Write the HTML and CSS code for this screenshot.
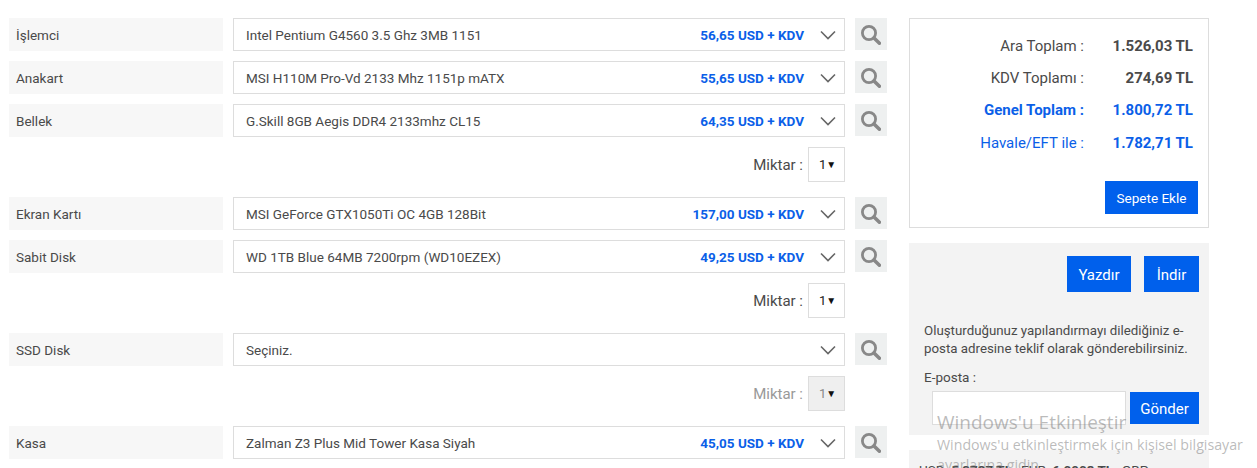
FILE: index.html
```html
<!DOCTYPE html>
<html lang="en">
<head>
    <meta charset="UTF-8">
    <meta name="viewport" content="width=device-width, initial-scale=1.0">
    <title>Sistem Toplama</title>
    <link rel="stylesheet" href="styles.css">
</head>
<body>
    <svg class="icon-defs" width="0" height="0">
        <symbol id="chevron" viewBox="0 0 16 10">
            <path d="M1 1.5 8 8.5 15 1.5" fill="none" stroke="#666" stroke-width="1.6"/>
        </symbol>
        <symbol id="search" viewBox="0 0 20 20">
            <circle cx="8" cy="8" r="6.6" fill="none" stroke="#888" stroke-width="2.8"/>
            <path d="M13 13 18.4 18.2" fill="none" stroke="#888" stroke-width="3.6" stroke-linecap="round"/>
        </symbol>
    </svg>

    <main class="page">
        <section class="parts">
            <div class="part">
                <div class="part-label">İşlemci</div>
                <div class="part-select">
                    <span class="part-name">Intel Pentium G4560 3.5 Ghz 3MB 1151</span>
                    <span class="part-price">56,65 USD + KDV</span>
                    <svg class="chevron"><use href="#chevron"/></svg>
                </div>
                <button class="search-button"><svg class="search-icon"><use href="#search"/></svg></button>
            </div>
            <div class="part">
                <div class="part-label">Anakart</div>
                <div class="part-select">
                    <span class="part-name">MSI H110M Pro-Vd 2133 Mhz 1151p mATX</span>
                    <span class="part-price">55,65 USD + KDV</span>
                    <svg class="chevron"><use href="#chevron"/></svg>
                </div>
                <button class="search-button"><svg class="search-icon"><use href="#search"/></svg></button>
            </div>
            <div class="part">
                <div class="part-label">Bellek</div>
                <div class="part-select">
                    <span class="part-name">G.Skill 8GB Aegis DDR4 2133mhz CL15</span>
                    <span class="part-price">64,35 USD + KDV</span>
                    <svg class="chevron"><use href="#chevron"/></svg>
                </div>
                <button class="search-button"><svg class="search-icon"><use href="#search"/></svg></button>
            </div>
            <div class="quantity">
                <span>Miktar :</span>
                <div class="quantity-box"><span class="quantity-value">1</span><span class="quantity-arrow">▼</span></div>
            </div>
            <div class="part">
                <div class="part-label">Ekran Kartı</div>
                <div class="part-select">
                    <span class="part-name">MSI GeForce GTX1050Ti OC 4GB 128Bit</span>
                    <span class="part-price">157,00 USD + KDV</span>
                    <svg class="chevron"><use href="#chevron"/></svg>
                </div>
                <button class="search-button"><svg class="search-icon"><use href="#search"/></svg></button>
            </div>
            <div class="part">
                <div class="part-label">Sabit Disk</div>
                <div class="part-select">
                    <span class="part-name">WD 1TB Blue 64MB 7200rpm (WD10EZEX)</span>
                    <span class="part-price">49,25 USD + KDV</span>
                    <svg class="chevron"><use href="#chevron"/></svg>
                </div>
                <button class="search-button"><svg class="search-icon"><use href="#search"/></svg></button>
            </div>
            <div class="quantity">
                <span>Miktar :</span>
                <div class="quantity-box"><span class="quantity-value">1</span><span class="quantity-arrow">▼</span></div>
            </div>
            <div class="part">
                <div class="part-label">SSD Disk</div>
                <div class="part-select">
                    <span class="part-name">Seçiniz.</span>
                    <svg class="chevron"><use href="#chevron"/></svg>
                </div>
                <button class="search-button"><svg class="search-icon"><use href="#search"/></svg></button>
            </div>
            <div class="quantity disabled">
                <span>Miktar :</span>
                <div class="quantity-box"><span class="quantity-value">1</span><span class="quantity-arrow">▼</span></div>
            </div>
            <div class="part">
                <div class="part-label">Kasa</div>
                <div class="part-select">
                    <span class="part-name">Zalman Z3 Plus Mid Tower Kasa Siyah</span>
                    <span class="part-price">45,05 USD + KDV</span>
                    <svg class="chevron"><use href="#chevron"/></svg>
                </div>
                <button class="search-button"><svg class="search-icon"><use href="#search"/></svg></button>
            </div>
        </section>

        <aside class="side">
            <div class="totals">
                <div class="total-row"><span class="total-label">Ara Toplam :</span><b class="total-value">1.526,03 TL</b></div>
                <div class="total-row"><span class="total-label">KDV Toplamı :</span><b class="total-value">274,69 TL</b></div>
                <div class="total-row blue"><b class="total-label">Genel Toplam :</b><b class="total-value">1.800,72 TL</b></div>
                <div class="total-row blue"><span class="total-label">Havale/EFT ile :</span><b class="total-value">1.782,71 TL</b></div>
                <div class="cart-row"><button class="blue-button cart-button">Sepete Ekle</button></div>
            </div>
            <div class="share">
                <div class="share-buttons">
                    <button class="blue-button share-button">Yazdır</button>
                    <button class="blue-button share-button">İndir</button>
                </div>
                <p class="share-text">Oluşturduğunuz yapılandırmayı dilediğiniz e-posta adresine teklif olarak gönderebilirsiniz.</p>
                <div class="mail-label">E-posta :</div>
                <div class="mail-row">
                    <input class="mail-input" type="text">
                    <button class="blue-button send-button">Gönder</button>
                </div>
            </div>
            <div class="rates">
                <span>USD: <b>5,3737 TL</b></span>
                <span>EUR: <b>6,0903 TL</b></span>
                <span>GBP</span>
            </div>
        </aside>
    </main>

    <div class="activate">
        <div class="activate-title">Windows'u Etkinleştir</div>
        <div class="activate-text">Windows'u etkinleştirmek için kişisel bilgisayar<br>ayarlarına gidin.</div>
    </div>
</body>
</html>
```

FILE: styles.css
```css
html, body {
    height: 468px;
    overflow: hidden;
}

body {
    margin: 0;
    background-color: white;
    color: #4a4a4a;
    font-family: "Roboto", "Liberation Sans", sans-serif;
    font-size: 13.5px;
}

button {
    font-family: inherit;
    border: 0;
    padding: 0;
}

.icon-defs {
    position: absolute;
}

.page {
    display: flex;
    align-items: flex-start;
    padding: 18px 0 0 9px;
}

.parts {
    width: 878px;
    flex-shrink: 0;
}

.part {
    display: flex;
    height: 33px;
    margin-bottom: 10px;
}

.part-label {
    width: 207px;
    padding-left: 7px;
    margin-right: 10px;
    line-height: 35px;
    background-color: #f7f7f7;
}

.part-select {
    display: flex;
    align-items: center;
    box-sizing: border-box;
    width: 612px;
    padding: 1px 8px 0 12px;
    border: 1px solid #ddd;
}

.part-name {
    flex: 1;
}

.part-price {
    font-weight: 700;
    color: #0b5fe8;
}

.chevron {
    width: 16px;
    height: 10px;
    margin-left: 16px;
}

.search-button {
    width: 32px;
    height: 32px;
    margin-left: 10px;
    background-color: #eef0f0;
}

.search-icon {
    display: block;
    width: 20px;
    height: 20px;
    margin: 1px 0 0 6px;
}

.quantity {
    display: flex;
    align-items: center;
    justify-content: flex-end;
    gap: 5px;
    width: 836px;
    height: 35px;
    margin-bottom: 15px;
    font-size: 15px;
}

.quantity-box {
    box-sizing: border-box;
    width: 37px;
    height: 35px;
    border: 1px solid #ddd;
    padding-left: 10px;
    line-height: 33px;
    font-size: 13px;
    color: #222;
}

.quantity-arrow {
    font-size: 10px;
    vertical-align: 1px;
    color: #111;
}

.quantity.disabled {
    color: #999;
}

.quantity.disabled .quantity-box {
    background-color: #efefef;
    color: #888;
}

.side {
    width: 300px;
    margin-left: 22px;
    flex-shrink: 0;
}

.totals {
    box-sizing: border-box;
    height: 210px;
    padding: 11px 15px 0;
    border: 1px solid #ddd;
    margin-bottom: 15px;
}

.total-row {
    display: flex;
    justify-content: flex-end;
    height: 32.2px;
    line-height: 32px;
    font-size: 15px;
}

.total-label {
    text-align: right;
}

.total-value {
    width: 109px;
    text-align: right;
}

.total-row.blue {
    color: #0b5fe8;
}

.cart-row {
    display: flex;
    justify-content: flex-end;
    margin: 22px -5px 0 0;
}

.blue-button {
    padding-top: 2px;
    background-color: #0060ec;
    color: white;
    font-size: 15px;
}

.cart-button {
    width: 93px;
    height: 33px;
    font-size: 13.5px;
}

.share {
    box-sizing: border-box;
    height: 192px;
    padding: 13px 10px 0 15px;
    background-color: #f3f3f3;
    margin-bottom: 15px;
}

.share-buttons {
    display: flex;
    justify-content: flex-end;
    gap: 13px;
}

.share-button {
    height: 36px;
    width: 64px;
}

.share-button + .share-button {
    width: 55px;
}

.share-text {
    margin: 30px 0 0;
    line-height: 17.5px;
    font-size: 13.3px;
}

.mail-label {
    margin-top: 11px;
    line-height: 18px;
}

.mail-row {
    display: flex;
    align-items: flex-start;
    margin: 5px 0 0 8px;
    gap: 4px;
}

.mail-input {
    box-sizing: border-box;
    width: 194px;
    height: 34px;
    background-color: white;
    border: 1px solid #ddd;
    padding: 0;
}

.send-button {
    width: 69px;
    height: 32px;
    margin-top: 1px;
}

.rates {
    box-sizing: border-box;
    display: flex;
    gap: 9px;
    height: 18px;
    padding: 11px 0 0 10px;
    overflow: hidden;
    line-height: 18px;
    background-color: #f3f3f3;
    white-space: nowrap;
}

.activate {
    position: absolute;
    left: 937px;
    top: 409px;
    width: 320px;
    color: rgba(120, 120, 120, 0.5);
    font-family: "Open Sans", sans-serif;
    white-space: nowrap;
}

.activate-title {
    font-size: 19px;
    line-height: 26px;
}

.activate-text {
    margin-top: 0;
    font-size: 14.2px;
    line-height: 20px;
}
```
